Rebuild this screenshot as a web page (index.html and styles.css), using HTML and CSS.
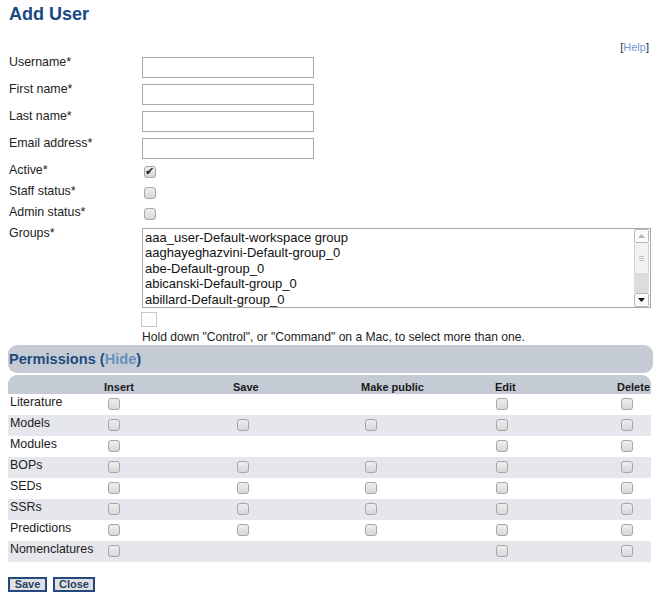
FILE: index.html
```html
<!DOCTYPE html>
<html>
<head>
<meta charset="utf-8">
<title>Add User</title>
<link rel="stylesheet" href="styles.css">
</head>
<body>
<div class="page">
  <h1 class="title">Add User</h1>
  <div class="help">[<a href="#">Help</a>]</div>

  <form class="user-form">
    <div class="row text-row">
      <label class="label">Username*</label>
      <div class="field"><input class="text-input" type="text"></div>
    </div>
    <div class="row text-row">
      <label class="label">First name*</label>
      <div class="field"><input class="text-input" type="text"></div>
    </div>
    <div class="row text-row">
      <label class="label">Last name*</label>
      <div class="field"><input class="text-input" type="text"></div>
    </div>
    <div class="row text-row">
      <label class="label">Email address*</label>
      <div class="field"><input class="text-input" type="text"></div>
    </div>
    <div class="row check-row">
      <label class="label">Active*</label>
      <div class="field"><input class="cb form-cb" type="checkbox" checked></div>
    </div>
    <div class="row check-row">
      <label class="label">Staff status*</label>
      <div class="field"><input class="cb form-cb" type="checkbox"></div>
    </div>
    <div class="row check-row">
      <label class="label">Admin status*</label>
      <div class="field"><input class="cb form-cb" type="checkbox"></div>
    </div>
    <div class="row groups-row">
      <label class="label">Groups*</label>
      <div class="field">
        <div class="listbox">
          <div class="options">
            <div class="opt">aaa_user-Default-workspace group</div>
            <div class="opt">aaghayeghazvini-Default-group_0</div>
            <div class="opt">abe-Default-group_0</div>
            <div class="opt">abicanski-Default-group_0</div>
            <div class="opt">abillard-Default-group_0</div>
          </div>
          <div class="vscroll">
            <div class="sb-btn"><svg width="7" height="4" viewBox="0 0 7 4"><polygon points="0,4 3.5,0 7,4" fill="#b4b4b4"/></svg></div>
            <div class="sb-thumb"><svg width="5" height="5" viewBox="0 0 5 5"><rect x="0" y="0" width="5" height="1" fill="#c4c4c4"/><rect x="0" y="2" width="5" height="1" fill="#c4c4c4"/><rect x="0" y="4" width="5" height="1" fill="#c4c4c4"/></svg></div>
            <div class="sb-track"></div>
            <div class="sb-btn"><svg width="7" height="4" viewBox="0 0 7 4"><polygon points="0,0 7,0 3.5,4" fill="#111"/></svg></div>
          </div>
        </div>
        <div class="empty-box"></div>
        <div class="hint">Hold down "Control", or "Command" on a Mac, to select more than one.</div>
      </div>
    </div>

    <div class="perm-bar">Permissions (<a href="#" class="hide-link">Hide</a>)</div>

    <table class="perm-table">
      <colgroup>
        <col class="c-label"><col class="c-insert"><col class="c-save"><col class="c-public"><col class="c-edit"><col class="c-delete">
      </colgroup>
      <thead>
        <tr><th></th><th>Insert</th><th>Save</th><th>Make public</th><th class="th-edit">Edit</th><th>Delete</th></tr>
      </thead>
      <tbody>
        <tr><td>Literature</td><td><input class="cb" type="checkbox"></td><td></td><td></td><td><input class="cb" type="checkbox"></td><td><input class="cb" type="checkbox"></td></tr>
        <tr><td>Models</td><td><input class="cb" type="checkbox"></td><td><input class="cb" type="checkbox"></td><td><input class="cb" type="checkbox"></td><td><input class="cb" type="checkbox"></td><td><input class="cb" type="checkbox"></td></tr>
        <tr><td>Modules</td><td><input class="cb" type="checkbox"></td><td></td><td></td><td><input class="cb" type="checkbox"></td><td><input class="cb" type="checkbox"></td></tr>
        <tr><td>BOPs</td><td><input class="cb" type="checkbox"></td><td><input class="cb" type="checkbox"></td><td><input class="cb" type="checkbox"></td><td><input class="cb" type="checkbox"></td><td><input class="cb" type="checkbox"></td></tr>
        <tr><td>SEDs</td><td><input class="cb" type="checkbox"></td><td><input class="cb" type="checkbox"></td><td><input class="cb" type="checkbox"></td><td><input class="cb" type="checkbox"></td><td><input class="cb" type="checkbox"></td></tr>
        <tr><td>SSRs</td><td><input class="cb" type="checkbox"></td><td><input class="cb" type="checkbox"></td><td><input class="cb" type="checkbox"></td><td><input class="cb" type="checkbox"></td><td><input class="cb" type="checkbox"></td></tr>
        <tr><td>Predictions</td><td><input class="cb" type="checkbox"></td><td><input class="cb" type="checkbox"></td><td><input class="cb" type="checkbox"></td><td><input class="cb" type="checkbox"></td><td><input class="cb" type="checkbox"></td></tr>
        <tr><td>Nomenclatures</td><td><input class="cb" type="checkbox"></td><td></td><td></td><td><input class="cb" type="checkbox"></td><td><input class="cb" type="checkbox"></td></tr>
      </tbody>
    </table>

    <div class="buttons">
      <button type="button" class="btn btn-save">Save</button>
      <button type="button" class="btn btn-close">Close</button>
    </div>
  </form>
</div>
</body>
</html>
```

FILE: styles.css
```css
body {
  margin: 0;
  background: #ffffff;
  color: #222222;
  font-family: "Liberation Sans", Arial, sans-serif;
}

.page {
  padding-left: 8px;
  width: 645px;
}

.title {
  margin: 3px 0 0 1px;
  font-size: 18px;
  line-height: 22px;
  font-weight: bold;
  color: #184985;
}

.help {
  margin-top: 16px;
  padding-right: 4px;
  text-align: right;
  font-size: 11px;
  line-height: 13px;
  color: #1a1a1a;
}

.help a {
  color: #6f9bd1;
  text-decoration: none;
}

.user-form {
  margin: 1px 0 0;
}

.row {
  display: grid;
  grid-template-columns: 134px 509px;
  align-items: start;
}

.label {
  padding-left: 1px;
  font-size: 12.4px;
  line-height: 14px;
  color: #222222;
}

.text-row {
  height: 27px;
}

.check-row {
  height: 21px;
}

.text-input {
  display: block;
  box-sizing: border-box;
  width: 172px;
  height: 21px;
  margin: 2px 0 0;
  padding: 0 2px;
  border: 1px solid #a9a9a9;
  background: #ffffff;
}

.cb {
  -webkit-appearance: none;
  appearance: none;
  display: block;
  position: relative;
  box-sizing: border-box;
  width: 12px;
  height: 12px;
  margin: 3px 0 0 4px;
  border: 1px solid #a6a6a6;
  border-radius: 3px;
  background: linear-gradient(#eeeeee, #d8d8d8);
}

.form-cb {
  margin: 3px 0 0 2px;
}

.cb:checked::after {
  content: "\2714";
  position: absolute;
  left: 0;
  top: -1px;
  font-family: "DejaVu Sans", sans-serif;
  font-size: 11px;
  line-height: 12px;
  color: #1e1e1e;
}

.listbox {
  display: flex;
  box-sizing: border-box;
  width: 509px;
  height: 80px;
  margin-top: 2px;
  border: 1px solid #a9a9a9;
  background: #ffffff;
}

.options {
  flex: 1;
  padding: 0.5px 0 0 2px;
  overflow: hidden;
  font-size: 13px;
  line-height: 15.6px;
  color: #111111;
}

.opt {
  white-space: nowrap;
}

.vscroll {
  display: flex;
  flex-direction: column;
  width: 15px;
  margin: 0 1px 0 0;
}

.sb-btn {
  display: flex;
  align-items: center;
  justify-content: center;
  box-sizing: border-box;
  height: 14px;
  border: 1px solid #b8b8b8;
  border-radius: 2px;
  background: #fbfbfb;
}

.sb-thumb {
  display: flex;
  align-items: center;
  justify-content: center;
  box-sizing: border-box;
  height: 30px;
  border-left: 1px solid #d0d0d0;
  border-right: 1px solid #d0d0d0;
  background: #f2f2f2;
}

.sb-track {
  flex: 1;
  background: #dcdcdc;
}

.empty-box {
  box-sizing: border-box;
  width: 16px;
  height: 15px;
  margin: 4px 0 0 -1px;
  border: 1px solid #c8c8c8;
}

.hint {
  margin-top: 3px;
  font-size: 12.1px;
  line-height: 14px;
  color: #222222;
  white-space: nowrap;
}

.perm-bar {
  box-sizing: border-box;
  width: 645px;
  height: 28px;
  margin-top: 1px;
  padding-left: 1px;
  border-radius: 9px;
  background: #c5cbd5;
  font-size: 14.6px;
  line-height: 28px;
  font-weight: bold;
  color: #1d4c80;
}

.hide-link {
  color: #6690bb;
  text-decoration: none;
}

.perm-table {
  width: 643px;
  margin-top: 2px;
  border-collapse: collapse;
  border-spacing: 0;
  table-layout: fixed;
  font-size: 12.4px;
  line-height: 14px;
}

.c-label { width: 95px; }
.c-insert { width: 129px; }
.c-save { width: 128px; }
.c-public { width: 131px; }
.c-edit { width: 125px; }
.c-delete { width: 35px; }

.perm-table th {
  height: 19px;
  padding: 0 0 0 1px;
  vertical-align: bottom;
  text-align: left;
  font-size: 11px;
  line-height: 13px;
  font-weight: bold;
  color: #1a1a1a;
  background: #c5cbd5;
  white-space: nowrap;
}

.perm-table th:first-child {
  border-top-left-radius: 9px;
}

.perm-table th:last-child {
  border-top-right-radius: 9px;
}

.perm-table .th-edit {
  padding-left: 4px;
}

.perm-table tbody tr {
  height: 21px;
}

.perm-table td {
  padding: 1px;
  vertical-align: top;
  color: #222222;
  white-space: nowrap;
}

.perm-table td:first-child {
  padding-left: 2px;
}

.perm-table tbody tr:nth-child(even) td {
  background: #e6e7ed;
}

.buttons {
  display: flex;
  gap: 6px;
  margin-top: 15px;
}

.btn {
  box-sizing: border-box;
  height: 15px;
  padding: 0;
  border: 2px solid #24497d;
  background: #e0e0e0;
  font-family: "Liberation Sans", Arial, sans-serif;
  font-size: 11px;
  line-height: 11px;
  font-weight: bold;
  color: #1f3f6b;
}

.btn-save { width: 39px; }
.btn-close { width: 42px; }
```
